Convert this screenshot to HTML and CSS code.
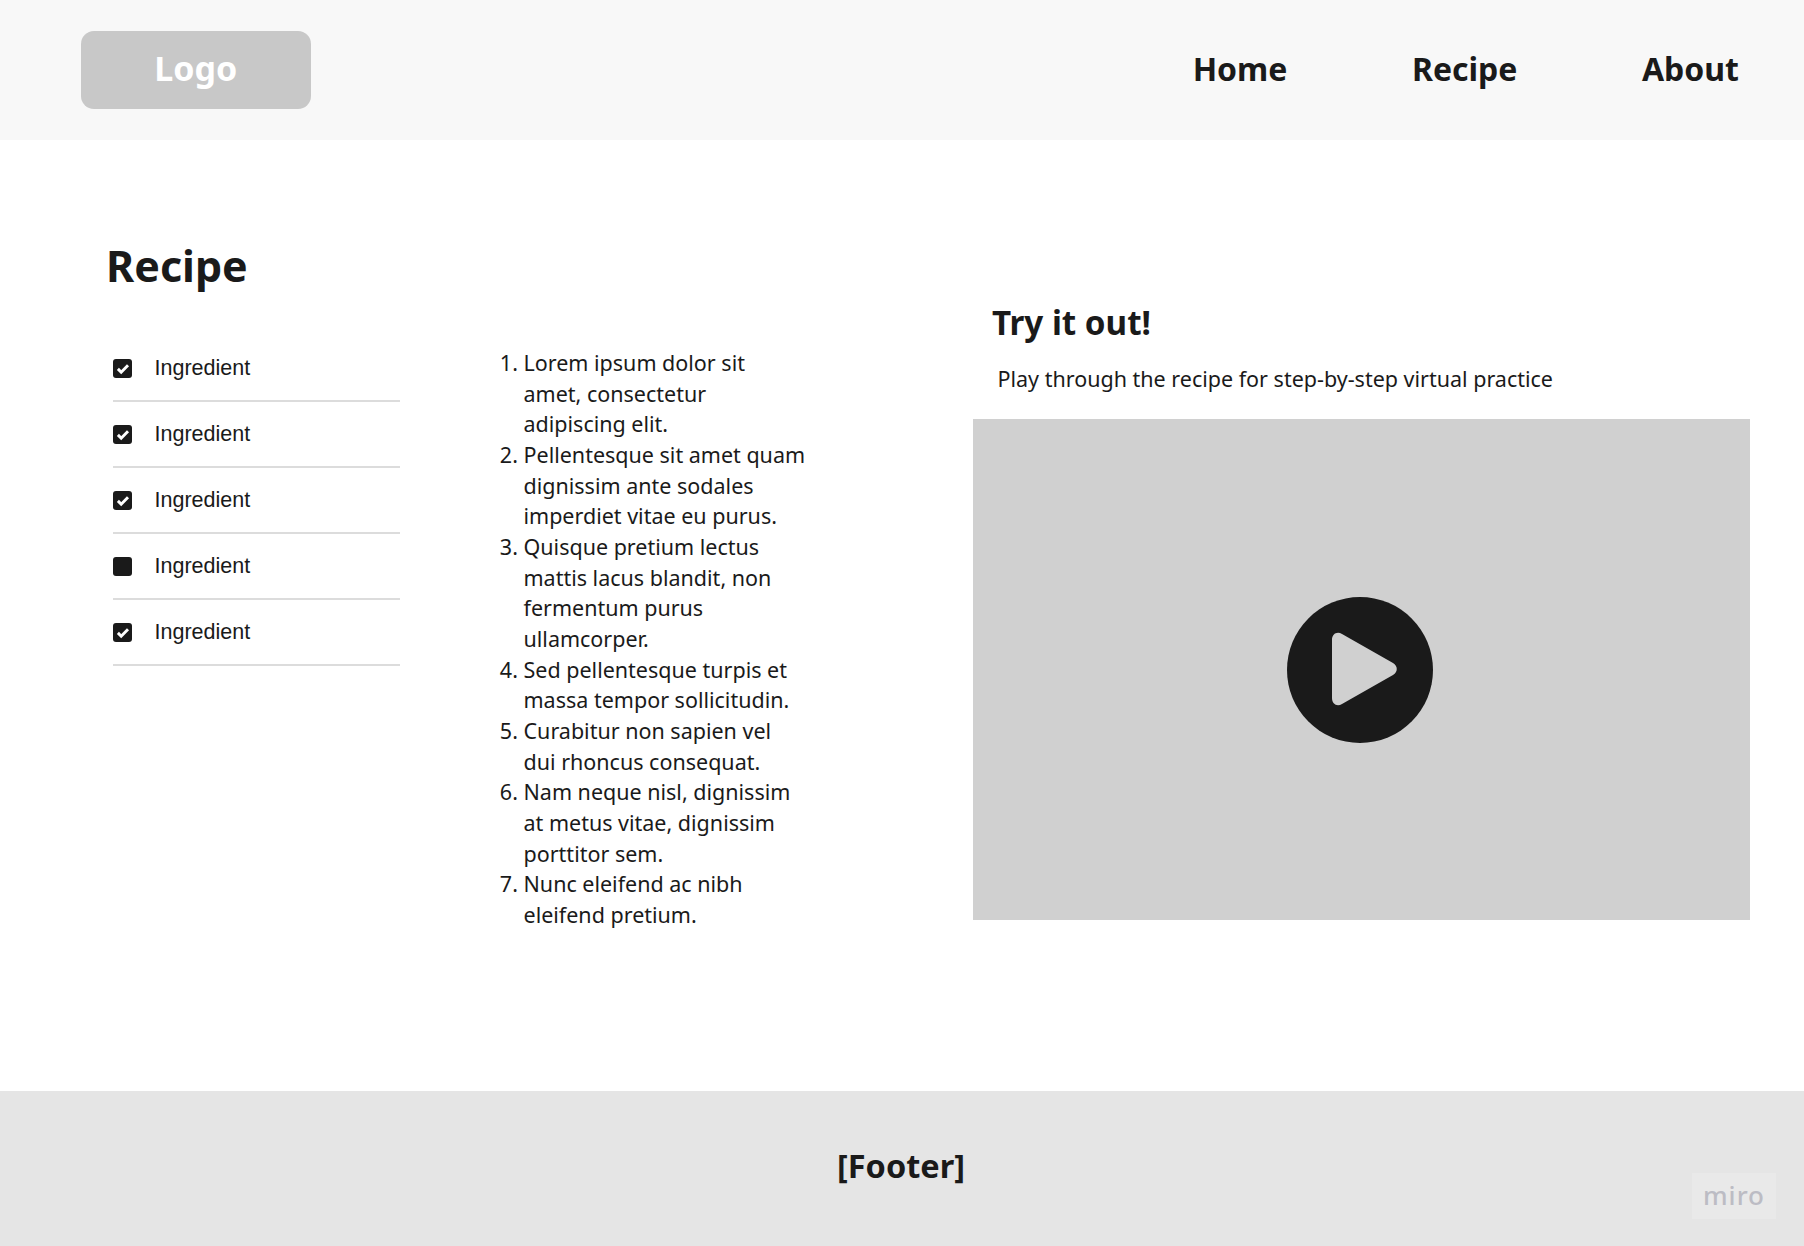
FILE: index.html
```html
<!DOCTYPE html>
<html lang="en">
<head>
    <meta charset="UTF-8">
    <title>Recipe</title>
    <link rel="stylesheet" href="styles.css">
</head>
<body>
    <header class="topBar">
        <div class="logo">Logo</div>
        <nav class="topNav">
            <a href="#">Home</a>
            <a href="#">Recipe</a>
            <a href="#">About</a>
        </nav>
    </header>

    <main class="content">
        <section class="recipeCol">
            <h1>Recipe</h1>
            <div class="ingredients">
                <div class="ingredient">
                    <svg class="check" viewBox="0 0 19 19"><rect width="19" height="19" rx="3" fill="#1a1a1a"/><path d="M4.9 9.9l3.3 3.3 6.8-6.9" fill="none" stroke="#fff" stroke-width="2.9"/></svg>
                    <span>Ingredient</span>
                </div>
                <div class="ingredient">
                    <svg class="check" viewBox="0 0 19 19"><rect width="19" height="19" rx="3" fill="#1a1a1a"/><path d="M4.9 9.9l3.3 3.3 6.8-6.9" fill="none" stroke="#fff" stroke-width="2.9"/></svg>
                    <span>Ingredient</span>
                </div>
                <div class="ingredient">
                    <svg class="check" viewBox="0 0 19 19"><rect width="19" height="19" rx="3" fill="#1a1a1a"/><path d="M4.9 9.9l3.3 3.3 6.8-6.9" fill="none" stroke="#fff" stroke-width="2.9"/></svg>
                    <span>Ingredient</span>
                </div>
                <div class="ingredient">
                    <svg class="check" viewBox="0 0 19 19"><rect width="19" height="19" rx="3" fill="#1a1a1a"/></svg>
                    <span>Ingredient</span>
                </div>
                <div class="ingredient">
                    <svg class="check" viewBox="0 0 19 19"><rect width="19" height="19" rx="3" fill="#1a1a1a"/><path d="M4.9 9.9l3.3 3.3 6.8-6.9" fill="none" stroke="#fff" stroke-width="2.9"/></svg>
                    <span>Ingredient</span>
                </div>
            </div>
        </section>

        <ol class="steps">
            <li>Lorem ipsum dolor sit amet, consectetur adipiscing elit.</li>
            <li>Pellentesque sit amet quam dignissim ante sodales imperdiet vitae eu purus.</li>
            <li>Quisque pretium lectus mattis lacus blandit, non fermentum purus ullamcorper.</li>
            <li>Sed pellentesque turpis et massa tempor sollicitudin.</li>
            <li>Curabitur non sapien vel dui rhoncus consequat.</li>
            <li>Nam neque nisl, dignissim at metus vitae, dignissim porttitor sem.</li>
            <li>Nunc eleifend ac nibh eleifend pretium.</li>
        </ol>

        <section class="tryCol">
            <h2>Try it out!</h2>
            <p>Play through the recipe for step-by-step virtual practice</p>
            <div class="video">
                <svg class="play" viewBox="0 0 146 146">
                    <circle cx="73" cy="73" r="73" fill="#1a1a1a"/>
                    <path d="M45 43c0-6 5-9 10-6l51 29c5 3 5 9 0 12l-51 29c-5 3-10 0-10-6z" fill="#d0d0d0"/>
                </svg>
            </div>
        </section>
    </main>

    <footer class="footer">
        <strong>[Footer]</strong>
        <div class="miro">miro</div>
    </footer>
</body>
</html>
```

FILE: styles.css
```css
* {
    margin: 0;
    padding: 0;
    box-sizing: border-box;
}

body {
    font-family: "Noto Sans", sans-serif;
    color: #1a1a1a;
    background-color: #fff;
}

.topBar {
    height: 140px;
    padding: 0 65px 0 81px;
    display: flex;
    align-items: center;
    justify-content: space-between;
    background-color: #f8f8f8;
}

.logo {
    width: 229.5px;
    height: 78px;
    padding-bottom: 5px;
    display: flex;
    align-items: center;
    justify-content: center;
    font-size: 34px;
    font-weight: 700;
    color: #fff;
    background-color: #c8c8c8;
    border-radius: 13px;
}

.topNav {
    display: flex;
    gap: 124.5px;
    padding-bottom: 3px;
}

.topNav a {
    font-size: 32px;
    font-weight: 700;
    color: #1a1a1a;
    text-decoration: none;
}

.content {
    height: 951px;
    display: flex;
    align-items: flex-start;
}

.recipeCol {
    width: 400px;
    padding: 97px 0 0 106px;
}

h1 {
    font-size: 43px;
    line-height: 58px;
    font-weight: 700;
}

.ingredients {
    margin: 41px 0 0 6.5px;
}

.ingredient {
    height: 66px;
    display: flex;
    align-items: center;
    gap: 23px;
    font-family: "Liberation Sans", Arial, sans-serif;
    font-size: 21.5px;
    border-bottom: 2px solid #dcdcdc;
}

.check {
    width: 19px;
    height: 19px;
    flex-shrink: 0;
}

.steps {
    width: 282px;
    margin: 208px 0 0 123.5px;
    padding-left: 0;
    list-style-position: outside;
    font-size: 21.5px;
    line-height: 30.67px;
}

.tryCol {
    width: 777px;
    margin: 161px 0 0 167.5px;
}

h2 {
    margin-left: 19px;
    font-size: 33.2px;
    line-height: 44px;
    font-weight: 700;
}

.tryCol p {
    margin: 19px 0 25px 24.5px;
    font-size: 21.5px;
    line-height: 30px;
}

.video {
    width: 777px;
    height: 501px;
    display: flex;
    align-items: center;
    justify-content: center;
    background-color: #d0d0d0;
}

.play {
    width: 146px;
    height: 146px;
    margin-right: 3px;
}

.footer {
    position: relative;
    height: 155px;
    padding: 0 2px 7px 0;
    display: flex;
    align-items: center;
    justify-content: center;
    font-size: 32.5px;
    background-color: #e5e5e5;
}

.miro {
    position: absolute;
    right: 28px;
    bottom: 27px;
    width: 84px;
    height: 46px;
    padding-bottom: 2px;
    display: flex;
    align-items: center;
    justify-content: center;
    font-size: 26px;
    font-weight: 500;
    letter-spacing: 1px;
    color: #bcbcc4;
    background-color: #e9e9e9;
}
```
